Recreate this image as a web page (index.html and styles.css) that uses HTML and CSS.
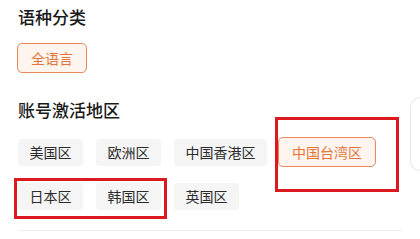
FILE: index.html
```html
<!DOCTYPE html>
<html lang="zh-CN">
<head>
    <meta charset="UTF-8">
    <meta name="viewport" content="width=device-width, initial-scale=1.0">
    <title>地区筛选</title>
    <link rel="stylesheet" href="styles.css">
</head>
<body>
    <div class="page">
        <div class="section">
            <h2 class="section-title">语种分类</h2>
            <div class="chips lang-chips">
                <span class="chip active">全语言</span>
            </div>
        </div>

        <div class="section">
            <h2 class="section-title title-region">账号激活地区</h2>
            <div class="chips region-chips">
                <span class="chip">美国区</span>
                <span class="chip">欧洲区</span>
                <span class="chip">中国香港区</span>
                <span class="chip active">中国台湾区</span>
                <span class="chip">日本区</span>
                <span class="chip">韩国区</span>
                <span class="chip">英国区</span>
            </div>
        </div>

        <div class="divider"></div>
    </div>

    <!-- 右侧露出的卡片边 -->
    <div class="side-card"></div>

    <!-- 标注框 -->
    <div class="mark mark-tw"></div>
    <div class="mark mark-jk"></div>
</body>
</html>
```

FILE: styles.css
```css
body {
    margin: 0;
    background: #fff;
    font-family: "Noto Sans CJK SC", "Noto Sans", sans-serif;
    color: #222;
    overflow: hidden;
}
.page {
    padding: 5px 17px 0 18px;
}
.section-title {
    margin: 0;
    font-size: 17px;
    line-height: 24px;
    font-weight: 500;
    color: #1a1a1a;
}
.title-region {
    margin-top: 25px;
}
.chips {
    display: flex;
    flex-wrap: wrap;
    align-items: center;
}
.lang-chips {
    margin-top: 14px;
    margin-left: -1px;
}
.region-chips {
    margin-top: 15px;
    gap: 16px 13px;
    width: 380px;
}
.chip {
    display: inline-block;
    height: 27px;
    line-height: 27px;
    padding: 0 11.5px;
    font-size: 14px;
    color: #2b2b2b;
    background: #f5f5f5;
    border-radius: 4px;
    white-space: nowrap;
}
.chip.active {
    height: 28px;
    line-height: 28px;
    padding: 0 13px;
    color: #e2743a;
    background: #fff4ee;
    border: 1px solid #e9885a;
    border-radius: 5px;
}
.region-chips .chip.active {
    margin-left: -2px;
}
.divider {
    margin-top: 20px;
    height: 1px;
    background: #efefef;
}
.side-card {
    position: absolute;
    left: 410px;
    top: 97px;
    width: 9px;
    height: 72px;
    border: 1px solid #e8e8e8;
    border-right: none;
    border-radius: 10px 0 0 10px;
}
.mark {
    position: absolute;
    border: 3px solid #da1a1f;
    box-sizing: border-box;
}
.mark-tw {
    left: 275px;
    top: 117px;
    width: 124px;
    height: 75px;
}
.mark-jk {
    left: 14px;
    top: 178px;
    width: 153px;
    height: 41px;
}
```
